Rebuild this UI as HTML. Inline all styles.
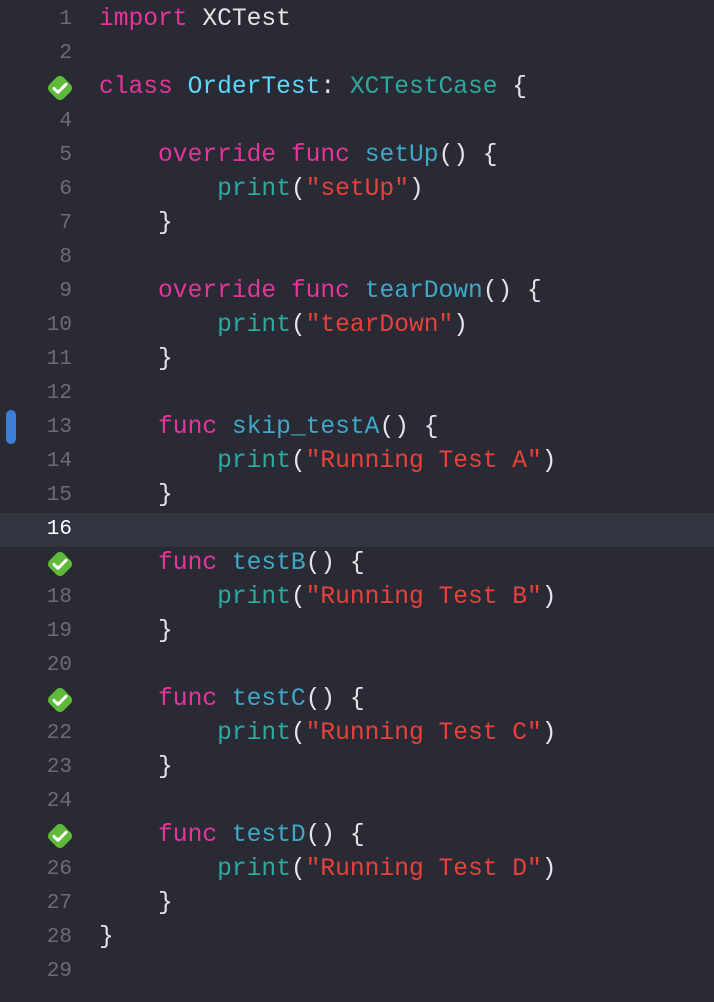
<!DOCTYPE html>
<html><head><meta charset="utf-8"><style>
body{margin:0;background:#292a33;width:714px;height:1002px;overflow:hidden;font-family:"Liberation Mono","DejaVu Sans Mono",monospace;}
.l{position:absolute;left:0;width:714px;height:34px;line-height:34px;font-size:24.6px;white-space:pre;color:#e4e4e6}
.n{position:absolute;right:642px;width:60px;text-align:right;color:#6c6d74;font-size:21px}
.c{position:absolute;left:99px}
.k{color:#e5359a}.t{color:#5dd8ff}.d{color:#3fa8c8}.x{color:#2fa8a0}.p{color:#2fa8a0}.s{color:#e8413c}
.cur{background:#32343f}.cur .n{color:#fff}
.chk{position:absolute;left:44px;top:1px;width:32px;height:32px}
</style></head><body>
<div id="w"></div>
<script>
const L=[
'<span class="k">import</span> XCTest','',
'<span class="k">class</span> <span class="t">OrderTest</span>: <span class="x">XCTestCase</span> {','',
'    <span class="k">override</span> <span class="k">func</span> <span class="d">setUp</span>() {',
'        <span class="p">print</span>(<span class="s">"setUp"</span>)','    }','',
'    <span class="k">override</span> <span class="k">func</span> <span class="d">tearDown</span>() {',
'        <span class="p">print</span>(<span class="s">"tearDown"</span>)','    }','',
'    <span class="k">func</span> <span class="d">skip_testA</span>() {',
'        <span class="p">print</span>(<span class="s">"Running Test A"</span>)','    }','',
'    <span class="k">func</span> <span class="d">testB</span>() {',
'        <span class="p">print</span>(<span class="s">"Running Test B"</span>)','    }','',
'    <span class="k">func</span> <span class="d">testC</span>() {',
'        <span class="p">print</span>(<span class="s">"Running Test C"</span>)','    }','',
'    <span class="k">func</span> <span class="d">testD</span>() {',
'        <span class="p">print</span>(<span class="s">"Running Test D"</span>)','    }','}',''];
const chk=[3,17,21,25];
let h='';
L.forEach((c,i)=>{const n=i+1;const top=3+34*i;
let num=chk.includes(n)?'<svg class="chk" viewBox="0 0 32 32"><rect x="6" y="6" width="20" height="20" rx="5" transform="rotate(45 16 16)" fill="#5fba3a"/><path d="M10 16.5l4 3.8 8-8" stroke="#fff" stroke-width="3" fill="none" stroke-linecap="round" stroke-linejoin="round"/></svg>':'<span class="n">'+n+'</span>';
h+='<div class="l'+(n==16?' cur':'')+'" style="top:'+top+'px">'+num+'<span class="c">'+c+'</span></div>';});
h+='<div style="position:absolute;left:6px;top:410px;width:10px;height:34px;border-radius:5px;background:#3d7fd6"></div>';
document.getElementById('w').innerHTML=h;
</script>
</body></html>
